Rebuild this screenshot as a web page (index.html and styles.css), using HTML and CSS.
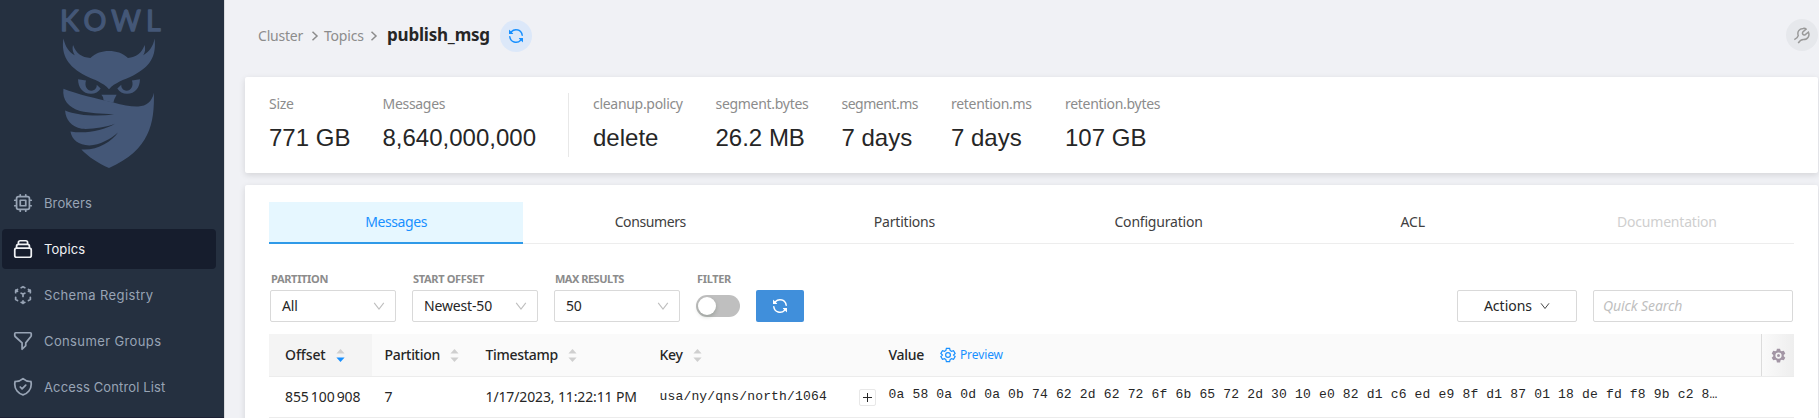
FILE: index.html
```html
<!DOCTYPE html>
<html lang="en">
<head>
<meta charset="utf-8">
<title>Kowl</title>
<link rel="stylesheet" href="styles.css">
</head>
<body>
<svg class="defs" width="0" height="0">
  <symbol id="sync" viewBox="0 0 16 16"><path fill="currentColor" d="M8 2.5a5.487 5.487 0 00-4.131 1.869l1.204 1.204A.25.25 0 014.896 6H1.25A.25.25 0 011 5.75V2.104a.25.25 0 01.427-.177l1.38 1.38A7.001 7.001 0 0114.95 7.16a.75.75 0 11-1.49.178A5.501 5.501 0 008 2.5zM1.705 8.005a.75.75 0 01.834.656 5.501 5.501 0 009.592 2.97l-1.204-1.204a.25.25 0 01.177-.427h3.646a.25.25 0 01.25.25v3.646a.25.25 0 01-.427.177l-1.38-1.38A7.001 7.001 0 011.05 8.84a.75.75 0 01.656-.834z"/></symbol>
  <symbol id="down" viewBox="0 0 12 12"><path fill="none" stroke="currentColor" stroke-width="1.1" d="M1.2 2.8L6 9l4.8-6.2"/></symbol>
  <symbol id="right" viewBox="0 0 8 12"><path fill="none" stroke="currentColor" stroke-width="1.5" d="M1.5 1.8L6 6l-4.500 4.200"/></symbol>
  <symbol id="sort" viewBox="0 0 9 13"><path class="up" d="M4.500 0L8.600 4.600H.4z"/><path class="dn" d="M4.500 13L8.600 8.400H.4z"/></symbol>
</svg>
<div class="app">
  <aside class="sidebar">
    <svg class="logo" viewBox="180 20 300 490">
      <text class="wordmark" x="180 250 334 438" y="92">KOWL</text>
      <path d="M190 115C196 140 206 156 224 165C216 150 217 142 219 134C228 160 245 171 271 173C288 158 305 152 327 152C349 152 367 158 384 173C408 171 426 158 434 134C437 146 436 155 430 165C448 156 460 138 464 115C470 170 450 200 400 226C370 240 345 247 327 267C309 247 285 240 255 226C205 200 182 165 190 115Z"/>
      <path d="M234 237L258 241C252 258 262 272 274 272C286 271 291 262 290 254L302 265C296 275 285 281 273 281C248 280 234 262 234 237Z"/>
      <path d="M420 237L396 241C402 258 392 272 380 272C368 271 363 262 364 254L352 265C358 275 369 281 381 281C406 280 420 262 420 237Z"/>
      <path d="M304 284H350Q343 295 340 308L311 301Q311 290 304 284Z"/>
      <path d="M190 266C230 282 290 296 340 307C370 315 395 320 415 319C440 318 456 305 462 278C464 370 450 450 327 504C295 490 265 470 244 448C290 452 335 425 354 397C330 418 300 434 268 436C235 434 216 420 211 394C255 402 310 392 345 371C315 382 275 388 245 386C213 378 197 360 195 331C230 346 290 350 342 343C300 340 270 340 240 333C205 322 186 300 190 266Z"/>
    </svg>
    <nav class="menu">
      <a class="item"><svg viewBox="0 0 24 24"><path d="M9 3v2m6-2v2M9 19v2m6-2v2M5 9H3m2 6H3m18-6h-2m2 6h-2M7 19h10a2 2 0 002-2V7a2 2 0 00-2-2H7a2 2 0 00-2 2v10a2 2 0 002 2zM9 9h6v6H9V9z"/></svg><span>Brokers</span></a>
      <a class="item active"><svg viewBox="0 0 24 24"><path d="M19 11H5m14 0a2 2 0 012 2v6a2 2 0 01-2 2H5a2 2 0 01-2-2v-6a2 2 0 012-2m14 0V9a2 2 0 00-2-2M5 11V9a2 2 0 012-2m0 0V5a2 2 0 012-2h6a2 2 0 012 2v2M7 7h10"/></svg><span>Topics</span></a>
      <a class="item wide"><svg viewBox="0 0 24 24"><path d="M14 10l-2 1m0 0l-2-1m2 1v2.500M20 7l-2 1m2-1l-2-1m2 1v2.500M14 4l-2-1-2 1M4 7l2-1M4 7l2 1M4 7v2.500M12 21l-2-1m2 1l2-1m-2 1v-2.500M6 18l-2-1v-2.500M18 18l2-1v-2.500"/></svg><span>Schema Registry</span></a>
      <a class="item wide"><svg viewBox="0 0 24 24"><path d="M3 4a1 1 0 011-1h16a1 1 0 011 1v2a2 2 0 01-.4 1.100L15 14v3l-4 4v-7L3.400 7.100A2 2 0 013 6V4z"/></svg><span>Consumer Groups</span></a>
      <a class="item narrow"><svg viewBox="0 0 24 24"><path d="M9 12l2 2 4-4m5.618-4.016A11.955 11.955 0 0112 2.944a11.955 11.955 0 01-8.618 3.040A12.020 12.020 0 003 9c0 5.591 3.824 10.290 9 11.622 5.176-1.332 9-6.030 9-11.622 0-1.042-.133-2.052-.382-3.016z"/></svg><span>Access Control List</span></a>
    </nav>
  </aside>
  <main class="main">
    <header class="head">
      <span class="crumb c1">Cluster</span><svg class="sep"><use href="#right"/></svg>
      <span class="crumb c2">Topics</span><svg class="sep"><use href="#right"/></svg>
      <h1>publish_msg</h1>
      <button class="round blue"><svg width="16" height="16"><use href="#sync"/></svg></button>
      <button class="round grey"><svg width="16" height="17" viewBox="284 77 49 51"><path d="M285 115C291 112 296 108 297 103C293 90 300 82 312 81C316 80 319 81 321 83L311 92C308 97 312 102 317 101L328 92C333 102 327 115 313 115C308 115 303 116 297 126"/></svg></button>
    </header>
    <section class="card stats">
      <div class="stat"><span>Size</span><b>771 GB</b></div>
      <div class="stat s2"><span>Messages</span><b>8,640,000,000</b></div>
      <i class="rule"></i>
      <div class="stat s3"><span>cleanup.policy</span><b>delete</b></div>
      <div class="stat s4"><span>segment.bytes</span><b>26.2 MB</b></div>
      <div class="stat s5"><span>segment.ms</span><b>7 days</b></div>
      <div class="stat s6"><span>retention.ms</span><b>7 days</b></div>
      <div class="stat"><span>retention.bytes</span><b>107 GB</b></div>
    </section>
    <section class="card body">
      <div class="tabs">
        <a class="tab on">Messages</a><a class="tab tight">Consumers</a><a class="tab">Partitions</a><a class="tab">Configuration</a><a class="tab">ACL</a><a class="tab off">Documentation</a>
      </div>
      <div class="controls">
        <label class="field"><span>PARTITION</span><div class="select">All<svg><use href="#down"/></svg></div></label>
        <label class="field"><span>START OFFSET</span><div class="select">Newest-50<svg><use href="#down"/></svg></div></label>
        <label class="field"><span class="tight">MAX RESULTS</span><div class="select">50<svg><use href="#down"/></svg></div></label>
        <label class="field"><span>FILTER</span><div class="switch"><i></i></div></label>
        <button class="reload"><svg width="16" height="16"><use href="#sync"/></svg></button>
        <button class="actions">Actions<svg><use href="#down"/></svg></button>
        <div class="search">Quick Search</div>
      </div>
      <div class="table">
        <div class="row th">
          <div class="cell sorted">Offset<svg class="sort desc"><use href="#sort"/></svg></div>
          <div class="cell">Partition<svg class="sort"><use href="#sort"/></svg></div>
          <div class="cell">Timestamp<svg class="sort"><use href="#sort"/></svg></div>
          <div class="cell">Key<svg class="sort"><use href="#sort"/></svg></div>
          <div class="cell"></div>
          <div class="cell">Value<span class="preview"><svg viewBox="0 0 24 24"><path d="M9.600 2h4.800l.8 3.200 2 1.150 3.100-.9 2.400 4.150-2.350 2.400 2.350 2.400-2.400 4.150-3.100-.9-2 1.150-.8 3.200H9.600l-.8-3.200-2-1.150-3.100.9-2.400-4.150L3.650 12 1.300 9.600l2.400-4.150 3.100.9 2-1.150z"/><circle cx="12" cy="12" r="3.600"/></svg>Preview</span></div>
          <div class="cell gear"><svg viewBox="0 0 24 24"><path fill-rule="evenodd" d="M9.500 1h5l.8 3.300 1.800 1 3.300-1 2.500 4.300-2.500 2.400v2l2.500 2.400-2.500 4.300-3.300-1-1.800 1-.8 3.300h-5l-.8-3.300-1.800-1-3.300 1-2.500-4.300 2.500-2.400v-2L1.100 8.600l2.500-4.300 3.300 1 1.800-1zM12 7a5 5 0 100 10 5 5 0 000-10zm0 2.600a2.400 2.400 0 110 4.800 2.400 2.400 0 010-4.800z"/></svg></div>
        </div>
        <div class="row td">
          <div class="cell num">855&#8201;100&#8201;908</div>
          <div class="cell">7</div>
          <div class="cell time">1/17/2023, 11:22:11 PM</div>
          <div class="cell mono">usa/ny/qns/north/1064</div>
          <div class="cell"><i class="plus"></i></div>
          <div class="cell mono hex">0a 58 0a 0d 0a 0b 74 62 2d 62 72 6f 6b 65 72 2d 30 10 e0 82 d1 c6 ed e9 8f d1 87 01 18 de fd f8 9b c2 8…</div>
        </div>
      </div>
    </section>
  </main>
</div>
</body>
</html>
```
FILE: styles.css
```css
* { box-sizing: border-box; }
body { margin: 0; background: #f0f1f5; font: 14px/22px "Noto Sans", "Open Sans", sans-serif; color: #262626; overflow: hidden; }
button { font: inherit; color: inherit; padding: 0; border: 0; }
svg { display: block; flex: none; }
.defs { position: absolute; }
.app { display: flex; height: 418px; overflow: hidden; }

/* sidebar */
.sidebar { width: 225px; flex: none; background: linear-gradient(#1d2135, #1d2135) bottom / 100% 1px no-repeat #253040; border-right: 1px solid #d9dadd; }
.logo { width: 100px; height: 163px; margin: 7px 0 0 60px; fill: #445777; overflow: visible; }
.wordmark { font: 400 86px/1 Lato, sans-serif; stroke: #445777; stroke-width: 4; stroke-linejoin: round; }
.menu { display: flex; flex-direction: column; gap: 6px; margin: 13px 8px 0 2px; }
.item { display: flex; align-items: center; gap: 10px; height: 40px; padding-left: 10px; border-radius: 4px; color: #98a4b5; font: 13px/20px Inter, sans-serif; letter-spacing: .1px; }
.item.wide { letter-spacing: .38px; }
.item.narrow { letter-spacing: .13px; }
.item span { padding-bottom: 1px; }
.item svg { width: 22px; height: 22px; fill: none; stroke: currentColor; stroke-width: 1.9; stroke-linecap: round; stroke-linejoin: round; }
.item.active { background: #161d2d; color: #f0f2f5; }

/* page header */
.main { flex: 1; min-width: 0; padding: 0 1px 0 20px; }
.head { display: flex; align-items: center; height: 77px; padding: 0 0 5px 13px; }
.crumb { color: #8c8c8c; letter-spacing: -.2px; }
.c1 { width: 53px; }
.c2 { width: 46px; }
.sep { width: 8px; height: 12px; margin-right: 5px; color: #8c8c8c; }
h1 { width: 113px; margin: 0 0 2px 4px; font: 700 17px/24px "Noto Sans", sans-serif; letter-spacing: -.2px; white-space: nowrap; }
.round { display: grid; place-items: center; width: 32px; height: 32px; border-radius: 50%; }
.round.blue { background: #dce8f9; color: #1890ff; }
.round.grey { margin: 0 0 2px auto; background: #e6e8ec; }
.grey svg { fill: none; stroke: #999; stroke-width: 4.500; }

.card { background: #fff; border-radius: 2px; box-shadow: 0 2px 6px rgba(0, 0, 0, .12); }

/* statistics */
.stats { display: flex; height: 96px; padding: 16px 24px; }
.stat { display: flex; flex-direction: column; white-space: nowrap; }
.stat span { color: #8c8c8c; line-height: 22px; letter-spacing: -.3px; }
.stat b { font: 24px/32px "Liberation Sans", Arial, sans-serif; margin-top: 7px; }
.stat:first-child { width: 113.500px; }
.s2 { width: 185.500px; }
.s3 { width: 122.500px; }
.s4 { width: 126px; }
.s5 { width: 109.500px; }
.s6 { width: 114px; }
.stat.s5 span { letter-spacing: -.5px; }
.rule { width: 1px; background: #e8e8e8; margin-right: 24px; }

/* topic content */
.body { height: 250px; margin-top: 12px; padding: 17px 24px 0; }
.tabs { display: grid; grid-template-columns: repeat(6, 1fr); height: 42px; border-bottom: 1px solid #ededed; }
.tab { height: 42px; line-height: 38px; padding-top: 1px; text-align: center; color: #404040; letter-spacing: -.2px; }
.tab.on, .tab.tight { letter-spacing: -.4px; }
.tab.on { background: #e6f7ff; color: #1890ff; border-bottom: 2px solid #2f9ae8; }
.tab.off { color: #cfcfcf; }

.controls { display: flex; align-items: flex-end; height: 78px; padding-left: 1px; }
.field { margin-right: 16px; }
.field span { display: block; margin-left: 1px; color: #8c8c8c; font-weight: 700; font-size: 11px; line-height: 16px; margin-bottom: 3px; letter-spacing: -.33px; }
.field .tight { letter-spacing: -.5px; }
.select { display: flex; align-items: center; justify-content: space-between; width: 126px; height: 32px; padding: 0 10px 0 11px; border: 1px solid #d9d9d9; border-radius: 2px; letter-spacing: -.15px; }
.select svg, .actions svg { width: 12px; height: 12px; color: #bfbfbf; }
.switch { width: 44px; height: 22px; margin: 8px 0 5px; padding: 2px; border-radius: 11px; background: #bfbfbf; }
.switch i { display: block; width: 18px; height: 18px; border-radius: 50%; background: #fff; box-shadow: 0 2px 4px rgba(0, 35, 11, .2); }
.reload { display: grid; place-items: center; width: 48px; height: 32px; border-radius: 2px; background: #408fdb; color: #fff; }
.actions { display: flex; align-items: center; justify-content: center; gap: 8px; width: 120px; height: 32px; margin: 0 16px 0 auto; border: 1px solid #d9d9d9; border-radius: 2px; background: #fff; }
.actions svg { width: 10px; height: 10px; color: #333; }
.search { width: 200px; height: 32px; margin-right: 1px; padding: 4px 9px; border: 1px solid #d9d9d9; border-radius: 2px; color: #bfbfbf; font-style: italic; letter-spacing: -.1px; }

/* messages table */
.table { margin-top: 12px; }
.row { display: grid; grid-template-columns: 103px 101px 174px 213px 15px 1fr 33px; border-bottom: 1px solid #ececec; }
.cell { display: flex; align-items: center; padding-left: 12.500px; white-space: nowrap; }
.cell:first-child { padding-left: 16px; }
.cell:nth-child(6) { padding-left: 13.500px; }
.th { height: 43px; background: #fafafa; font-weight: 500; letter-spacing: -.3px; }
.sorted { background: #f4f4f4; letter-spacing: -.1px; }
.sort { width: 9px; height: 13px; margin: 1px 0 0 10px; fill: #cfcfcf; }
.desc { --dn: #1890ff; }
.dn { fill: var(--dn, #cfcfcf); }
.preview { display: flex; align-items: center; gap: 4px; margin: 0 0 0 16px; color: #1890ff; font-size: 12px; font-weight: 400; letter-spacing: -.1px; }
.preview svg { width: 16px; height: 16px; fill: none; stroke: currentColor; stroke-width: 1.800; }
.th .gear { border-left: 1px solid #dcdcdc; padding-left: 9px; background: linear-gradient(90deg, #fafafa, #eee); }
.gear svg { width: 15px; height: 15px; fill: #a396a5; }
.td { height: 41px; }
.td .cell { height: 40px; }
.num { letter-spacing: -.12px; }
.time { letter-spacing: -.13px; }
.mono { font: 13px/20px "Liberation Mono", monospace; letter-spacing: .17px; }
.td .hex { padding-bottom: 4px; }
.plus { display: block; width: 17px; height: 17px; flex: none; margin-left: -14px; border: 1px solid #e8e8e8; border-radius: 2px; background: linear-gradient(#262626, #262626) center / 9px 1px no-repeat, linear-gradient(#262626, #262626) center / 1px 9px no-repeat; }
```
